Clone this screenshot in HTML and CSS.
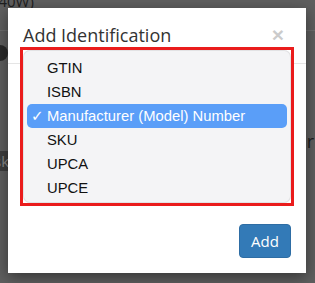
FILE: index.html
```html
<!DOCTYPE html>
<html>
<head>
<meta charset="utf-8">
<link rel="stylesheet" href="styles.css">
</head>
<body>
<div class="page">
  <div class="page-top">(40W)</div>
  <div class="page-rule"></div>
  <div class="page-row">
    <span class="dot"></span>
  </div>
  <div class="page-row2">
    <span class="chip">sk</span>
    <span class="tail">r</span>
  </div>
</div>

<div class="modal">
  <div class="modal-header">
    <h4 class="modal-title">Add Identification</h4>
    <span class="close">&times;</span>
  </div>
  <div class="modal-body">
    <div class="select-wrap">
      <div class="select-base"></div>
      <div class="popup">
        <ul class="menu">
          <li class="item">GTIN</li>
          <li class="item">ISBN</li>
          <li class="item selected"><span class="check">&#10003;</span>Manufacturer (Model) Number</li>
          <li class="item">SKU</li>
          <li class="item">UPCA</li>
          <li class="item">UPCE</li>
        </ul>
      </div>
    </div>
  </div>
  <div class="modal-footer">
    <button class="btn">Add</button>
  </div>
</div>
</body>
</html>
```

FILE: styles.css
```css
html, body {
  margin: 0;
  padding: 0;
}
body {
  width: 315px;
  height: 283px;
  overflow: hidden;
  background: #5f5f5f;
  font-family: "Open Sans", "Liberation Sans", sans-serif;
  position: relative;
}
.page {
  height: 283px;
  color: #222;
}
.page-top {
  font-size: 15px;
  line-height: 16px;
  margin-top: -7px;
  margin-left: -6px;
  color: #1e1e1e;
}
.page-rule {
  margin-top: 21px;
  height: 1px;
  background: #6e6e6e;
}
.page-row {
  height: 30px;
  display: flex;
  align-items: center;
}
.dot {
  display: block;
  width: 16px;
  height: 16px;
  border-radius: 50%;
  background: #2a2a2a;
  margin-left: -8px;
  margin-top: 14px;
}
.page-row2 {
  margin-top: 90px;
  display: flex;
  justify-content: space-between;
  align-items: center;
}
.chip {
  background: #3e3e3e;
  color: #8a8a8a;
  font-size: 15px;
  line-height: 20px;
  margin-left: -8px;
  padding: 0 2px;
}
.tail {
  font-size: 18px;
  color: #1e1e1e;
  margin-top: -40px;
  margin-right: 1px;
}

.modal {
  position: absolute;
  left: 8px;
  top: 8px;
  width: 298px;
  height: 265px;
  background: #fff;
  box-shadow: 0 4px 14px rgba(0, 0, 0, 0.45);
  display: flex;
  flex-direction: column;
}
.modal-header {
  padding: 15px;
  border-bottom: 1px solid #e5e5e5;
  display: flex;
  justify-content: space-between;
  align-items: center;
}
.modal-title {
  margin: 0;
  font-size: 18px;
  font-weight: 400;
  line-height: 25px;
  color: #333;
}
.close {
  font-family: "Liberation Sans", sans-serif;
  font-size: 21px;
  font-weight: 700;
  line-height: 1;
  color: #000;
  opacity: 0.2;
  margin-right: 7px;
  margin-top: -2px;
}
.modal-body {
  flex: 1;
  position: relative;
}
.select-wrap {
  position: relative;
  height: 100%;
}
.select-base {
  position: absolute;
  left: 15px;
  right: 14px;
  top: 136px;
  height: 1px;
  background: #c9c9c9;
}
.popup {
  position: absolute;
  left: 12px;
  top: -17px;
  width: 268px;
  height: 153px;
  border: 3px solid #ea1c1c;
  background: #fff;
}
.menu {
  list-style: none;
  margin: 0;
  padding: 6px 0 3px;
  height: 100%;
  box-sizing: border-box;
  background: #f4f4f6;
  border-radius: 7px;
  box-shadow: 0 0 0 1px #e2e2e4 inset;
  font-family: "Liberation Sans", Arial, sans-serif;
  font-size: 14.8px;
  color: #111;
}
.item {
  height: 24px;
  line-height: 24px;
  padding-left: 20px;
  margin: 0 4px;
  position: relative;
}
.item.selected {
  background: #5a9ef8;
  color: #fff;
  border-radius: 5px;
}
.check {
  position: absolute;
  left: 4px;
  top: 0;
  font-family: "DejaVu Sans", sans-serif;
  font-size: 15px;
}
.modal-footer {
  padding: 15px;
  display: flex;
  justify-content: flex-end;
}
.btn {
  font-family: "Open Sans", sans-serif;
  font-size: 15px;
  line-height: 20px;
  height: 34px;
  width: 52px;
  padding: 0;
  color: #fff;
  background: #337ab7;
  border: 1px solid #2e6da4;
  border-radius: 4px;
}
```
